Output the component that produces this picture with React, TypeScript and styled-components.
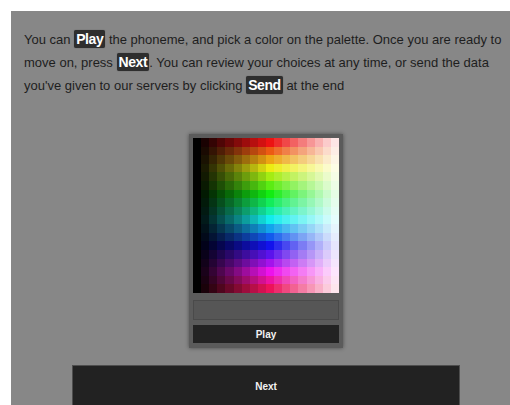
import React from 'react'
import styled, { createGlobalStyle } from 'styled-components'

const GlobalStyle = createGlobalStyle`
  html, body {
    margin: 0;
    padding: 0;
    background: #ffffff;
    overflow: hidden;
  }
  body {
    font-family: "Liberation Sans", Arial, Helvetica, sans-serif;
  }
`

const Panel = styled.div`
  margin: 11px 0 0 11px;
  width: 484px;
  padding: 17px 13px 40px 13px;
  background: #878787;
  min-height: 420px;
`

const Intro = styled.p`
  margin: 0;
  font-size: 13px;
  line-height: 23px;
  color: #1e1e1e;
`

const Key = styled.span`
  display: inline-block;
  background: #2e2e2e;
  color: #ffffff;
  font-size: 14px;
  font-weight: bold;
  letter-spacing: -0.4px;
  padding: 0 2px;
  line-height: 18px;
  border-radius: 2px;
  box-shadow: 0 0 1px rgba(0, 0, 0, 0.5);
`

const Picker = styled.div`
  width: 146px;
  margin: 37px auto 0;
  padding: 4px 4px 5px;
  background: #5b5b5b;
  box-shadow: 0 0 4px rgba(0, 0, 0, 0.45);
  display: flex;
  flex-direction: column;
`

const Palette = styled.div`
  display: grid;
  grid-template-columns: repeat(18, 1fr);
  grid-template-rows: repeat(18, 1fr);
  width: 146px;
  height: 155px;
`

const Cell = styled.div<{ $hue: number; $light: number }>`
  background: hsl(${p => p.$hue}, 85%, ${p => p.$light}%);
`

const Swatch = styled.div`
  margin-top: 7px;
  height: 18px;
  background: #565656;
  border: 1px solid #4a4a4a;
`

const PlayButton = styled.button`
  margin-top: 5px;
  height: 18px;
  border: none;
  padding: 0;
  background: #232323;
  color: #f2f2f2;
  font-family: "Liberation Sans", Arial, sans-serif;
  font-size: 10px;
  font-weight: bold;
`

const NextButton = styled.button`
  display: block;
  width: 388px;
  height: 42px;
  margin: 17px auto 0;
  background: #222222;
  border: 1px solid #4e4e4e;
  color: #f2f2f2;
  font-family: "Liberation Sans", Arial, sans-serif;
  font-size: 10px;
  font-weight: bold;
`

const rows = Array.from({ length: 18 }, (_, r) => r)
const cols = Array.from({ length: 18 }, (_, c) => c)

export default function App() {
  return (
    <>
      <GlobalStyle />
      <Panel>
        <Intro>
          You can <Key>Play</Key> the phoneme, and pick a color on the palette. Once you are ready to
          move on, press <Key>Next</Key>. You can review your choices at any time, or send the data
          you've given to our servers by clicking <Key>Send</Key> at the end
        </Intro>
        <Picker>
          <Palette>
            {rows.map(r =>
              cols.map(c => (
                <Cell key={`${r}-${c}`} $hue={r * 20} $light={(c / 18) * 100} />
              ))
            )}
          </Palette>
          <Swatch />
          <PlayButton>Play</PlayButton>
        </Picker>
        <NextButton>Next</NextButton>
      </Panel>
    </>
  )
}
